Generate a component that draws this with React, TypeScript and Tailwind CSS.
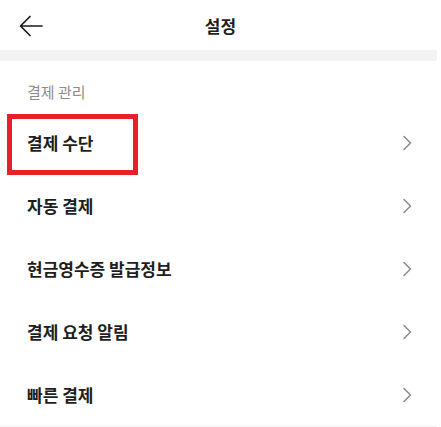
import React from "react";

const items = ["결제 수단", "자동 결제", "현금영수증 발급정보", "결제 요청 알림", "빠른 결제"];

function Chevron() {
  return (
    <svg width="10" height="16" viewBox="0 0 10 16" fill="none" className="block">
      <path d="M2 1.5 L8.5 8 L2 14.5" stroke="#8a8a8a" strokeWidth="1.5" strokeLinecap="round" strokeLinejoin="round" />
    </svg>
  );
}

export default function App() {
  return (
    <div
      className="w-[441px] h-[427px] bg-white overflow-hidden text-[#1e1e1e]"
      style={{ fontFamily: '"Noto Sans CJK KR", "Noto Sans", sans-serif' }}
    >
      <div className="relative h-[50px] flex items-center justify-center">
        <svg className="absolute left-[19px] top-[15px]" width="24" height="22" viewBox="0 0 24 22" fill="none">
          <path d="M23 11 H1.5 M11 1.5 L1.5 11 L11 20.5" stroke="#1a1a1a" strokeWidth="1.7" strokeLinecap="round" strokeLinejoin="round" />
        </svg>
        <span className="text-[17px] font-bold leading-none">설정</span>
      </div>
      <div className="h-[11px] w-[437px] bg-[#f3f3f3]" />
      <div className="h-[50px] pl-[27px] pt-[21px] text-[15px] leading-[20px] text-[#8c8c8c]">결제 관리</div>
      {items.map((t, i) => (
        <div key={t} className="relative h-[63px] flex items-center justify-between pl-[27px] pr-[29px]">
          <span className="text-[17px] font-semibold">{t}</span>
          <Chevron />
          {i === 0 && (
            <div className="absolute left-[7px] top-[3px] w-[131px] h-[61px] border-[5px] border-[#e8202a]" />
          )}
        </div>
      ))}
      <div className="h-[11px] w-[437px] bg-[#f3f3f3]" />
    </div>
  );
}
